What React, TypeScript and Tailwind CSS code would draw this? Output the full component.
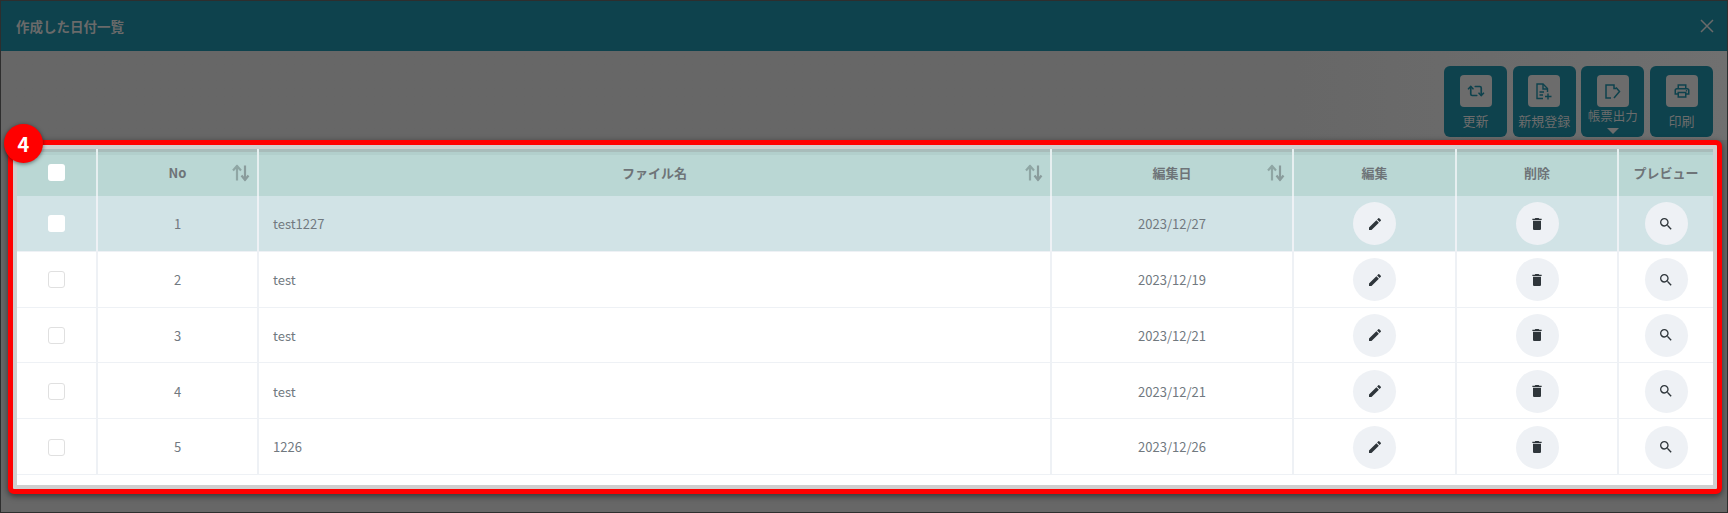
import React from 'react';
import { MdEdit, MdDelete, MdSearch, MdOutlinePrint } from 'react-icons/md';
import { Repeat2 } from 'lucide-react';

const FONT = '"Noto Sans CJK JP", "Noto Sans", sans-serif';

const GRID = 'grid grid-cols-[81px_161px_793px_242px_163px_162px_94px]';

const ROWS = [
  { no: 1, name: 'test1227', date: '2023/12/27' },
  { no: 2, name: 'test', date: '2023/12/19' },
  { no: 3, name: 'test', date: '2023/12/21' },
  { no: 4, name: 'test', date: '2023/12/21' },
  { no: 5, name: '1226', date: '2023/12/26' },
];

// --- ソートアイコン ---
const SortIcon = () => (
  <svg width="18" height="17" viewBox="0 0 18 17" fill="none" strokeWidth="2.2" className="absolute right-[7px] top-1/2 -translate-y-1/2">
    <path d="M5 16V2M1 6l4-4.5L9 6" stroke="#8fa6a4" />
    <path d="M13 1v14M9.500 11l3.500 4.500 3.500-4.500" stroke="#8a9c9c" />
  </svg>
);

// --- ツールバーのアイコン ---
const FilePlusIcon = () => (
  <svg width="16" height="17" viewBox="0 0 16 17" fill="none" stroke="#0e424d" strokeWidth="1.4">
    <path d="M7 15.500H1V1h6l4.500 4.500V9" />
    <path d="M7 1v5h4.500M3.500 9H8M3.500 12H7M12 10.500v6M9 13.500h6.500" />
  </svg>
);

const FileExportIcon = () => (
  <svg width="16" height="15" viewBox="0 0 16 15" fill="none" stroke="#0e424d" strokeWidth="1.5">
    <path d="M6 14H1V1h8v3.500h2" />
    <path d="M9 14l5.500-6.500L11 3.500" />
  </svg>
);

const CloseIcon = () => (
  <svg width="14" height="14" viewBox="0 0 14 14" fill="none" stroke="#6a6a6a" strokeWidth="1.5">
    <path d="M1 1l12 12M13 1 1 13" />
  </svg>
);

const ToolButton = ({ label, icon, caret }: { label: string; icon: React.ReactNode; caret?: boolean }) => (
  <button className="w-[63px] h-[71px] rounded-[6px] bg-[#0e424d] flex flex-col items-center pt-[9px]">
    <span className="w-[32px] h-[32px] rounded-[4px] bg-[#6c6c6c] flex items-center justify-center">{icon}</span>
    {caret ? (
      <>
        <span className="text-[12.5px] leading-[18px] text-[#6c6c6c] whitespace-nowrap">{label}</span>
        <span className="mt-[3px] w-0 h-0 border-x-[6px] border-x-transparent border-t-[6px] border-t-[#6c6c6c]" />
      </>
    ) : (
      <span className="mt-[5px] text-[13px] leading-[18px] text-[#6c6c6c] whitespace-nowrap">{label}</span>
    )}
  </button>
);

const HeadCell = ({ children, sort }: { children?: React.ReactNode; sort?: boolean }) => (
  <div className="relative flex items-center justify-center border-r-2 border-[#e6eff0] last:border-r-0 text-[13px] font-bold text-[#6e7478]">
    {children}
    {sort && <SortIcon />}
  </div>
);

const Cell = ({ children, left }: { children?: React.ReactNode; left?: boolean }) => (
  <div className={`flex items-center border-r-2 border-[#eef1f5] last:border-r-0 text-[13px] text-[#71797f] ${left ? 'justify-start pl-[14px]' : 'justify-center'}`}>
    {children}
  </div>
);

const RoundButton = ({ children }: { children: React.ReactNode }) => (
  <button className="w-[43px] h-[43px] rounded-full bg-[#eef1f5] flex items-center justify-center text-[#2f363b]">{children}</button>
);

const CheckBox = ({ bordered }: { bordered?: boolean }) => (
  <span className={`block w-[17px] h-[17px] rounded-[3px] bg-white ${bordered ? 'border border-[#e0e0e0]' : ''}`} />
);

export default function App() {
  return (
    <div className="h-[513px] bg-[#2e2e2e] px-px pt-px overflow-hidden" style={{ fontFamily: FONT }}>
      <div className="h-[511px] bg-[#676767] flex flex-col">
        {/* ヘッダー */}
        <div className="h-[50px] shrink-0 bg-[#0e424d] flex items-center justify-between pl-[15px] pr-[13px]">
          <span className="text-[13.5px] font-bold text-[#6a6a6a]">作成した日付一覧</span>
          <CloseIcon />
        </div>

        {/* ツールバー */}
        <div className="h-[89px] shrink-0 flex justify-end gap-[5.67px] pt-[15px] pr-[14px] bg-linear-to-r from-[#676767] via-[#676767] via-75% to-[#707070]">
          <ToolButton label="更新" icon={<Repeat2 size={18} color="#0e424d" strokeWidth={2.2} />} />
          <ToolButton label="新規登録" icon={<FilePlusIcon />} />
          <ToolButton label="帳票出力" icon={<FileExportIcon />} caret />
          <ToolButton label="印刷" icon={<MdOutlinePrint size={18} color="#0e424d" />} />
        </div>

        {/* テーブル + 赤枠 */}
        <div className="relative ml-[7px] w-[1714px] h-[354px] rounded-[6px] border-[5px] border-[#ff0000] shadow-[0_2px_6px_rgba(0,0,0,0.5)] bg-[#cfcfcf] p-[4px]">
          <div className="h-full bg-white">
            <div className={`${GRID} h-[47px] bg-[#bad7d4] shadow-[inset_0_3px_0_#a8bcba,inset_0_6px_0_#b2cfcc]`}>
              <HeadCell><CheckBox /></HeadCell>
              <HeadCell sort>No</HeadCell>
              <HeadCell sort>ファイル名</HeadCell>
              <HeadCell sort>編集日</HeadCell>
              <HeadCell>編集</HeadCell>
              <HeadCell>削除</HeadCell>
              <HeadCell>プレビュー</HeadCell>
            </div>
            {ROWS.map((r, i) => (
              <div key={r.no} className={`${GRID} h-[55.8px] shadow-[inset_0_-1px_0_#eef1f5] ${i === 0 ? 'bg-[#d1e3e6]' : 'bg-white'}`}>
                <Cell><CheckBox bordered={i !== 0} /></Cell>
                <Cell>{r.no}</Cell>
                <Cell left>{r.name}</Cell>
                <Cell>{r.date}</Cell>
                <Cell><RoundButton><MdEdit size={16} /></RoundButton></Cell>
                <Cell><RoundButton><MdDelete size={16} /></RoundButton></Cell>
                <Cell><RoundButton><MdSearch size={16} /></RoundButton></Cell>
              </div>
            ))}
          </div>
          {/* 番号バッジ */}
          <div className="absolute -left-[9px] -top-[21px] w-[39px] h-[39px] rounded-full bg-[#ff0000] flex items-center justify-center text-white text-[20px] font-bold shadow-[0_1px_4px_rgba(0,0,0,0.5)]">
            4
          </div>
        </div>
      </div>
    </div>
  );
}
